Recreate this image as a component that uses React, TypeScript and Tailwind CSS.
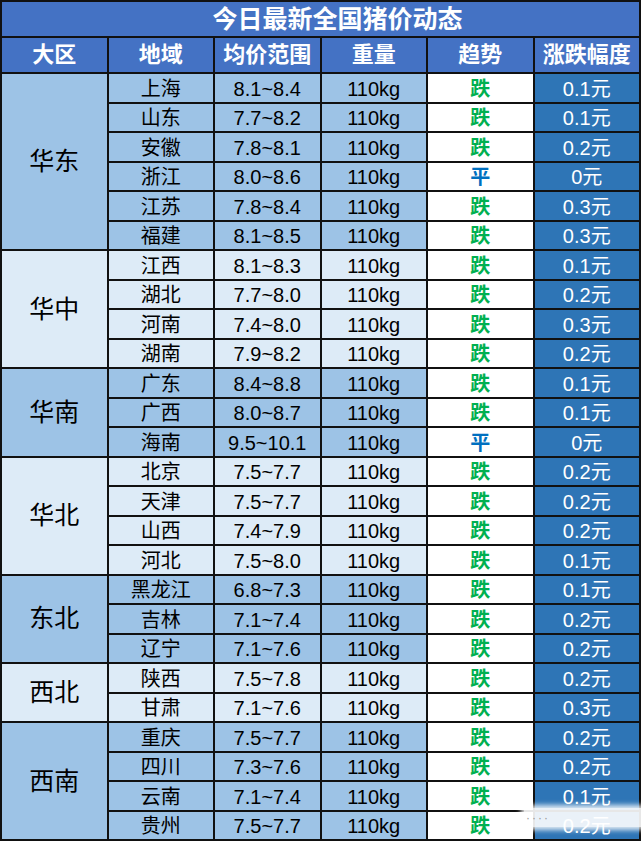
import React from "react";

type Row = { city: string; range: string; trend: "跌" | "平"; change: string };
type Group = { region: string; rows: Row[] };

const GROUPS: Group[] = [
  {
    region: "华东",
    rows: [
      { city: "上海", range: "8.1~8.4", trend: "跌", change: "0.1元" },
      { city: "山东", range: "7.7~8.2", trend: "跌", change: "0.1元" },
      { city: "安徽", range: "7.8~8.1", trend: "跌", change: "0.2元" },
      { city: "浙江", range: "8.0~8.6", trend: "平", change: "0元" },
      { city: "江苏", range: "7.8~8.4", trend: "跌", change: "0.3元" },
      { city: "福建", range: "8.1~8.5", trend: "跌", change: "0.3元" },
    ],
  },
  {
    region: "华中",
    rows: [
      { city: "江西", range: "8.1~8.3", trend: "跌", change: "0.1元" },
      { city: "湖北", range: "7.7~8.0", trend: "跌", change: "0.2元" },
      { city: "河南", range: "7.4~8.0", trend: "跌", change: "0.3元" },
      { city: "湖南", range: "7.9~8.2", trend: "跌", change: "0.2元" },
    ],
  },
  {
    region: "华南",
    rows: [
      { city: "广东", range: "8.4~8.8", trend: "跌", change: "0.1元" },
      { city: "广西", range: "8.0~8.7", trend: "跌", change: "0.1元" },
      { city: "海南", range: "9.5~10.1", trend: "平", change: "0元" },
    ],
  },
  {
    region: "华北",
    rows: [
      { city: "北京", range: "7.5~7.7", trend: "跌", change: "0.2元" },
      { city: "天津", range: "7.5~7.7", trend: "跌", change: "0.2元" },
      { city: "山西", range: "7.4~7.9", trend: "跌", change: "0.2元" },
      { city: "河北", range: "7.5~8.0", trend: "跌", change: "0.1元" },
    ],
  },
  {
    region: "东北",
    rows: [
      { city: "黑龙江", range: "6.8~7.3", trend: "跌", change: "0.1元" },
      { city: "吉林", range: "7.1~7.4", trend: "跌", change: "0.2元" },
      { city: "辽宁", range: "7.1~7.6", trend: "跌", change: "0.2元" },
    ],
  },
  {
    region: "西北",
    rows: [
      { city: "陕西", range: "7.5~7.8", trend: "跌", change: "0.2元" },
      { city: "甘肃", range: "7.1~7.6", trend: "跌", change: "0.3元" },
    ],
  },
  {
    region: "西南",
    rows: [
      { city: "重庆", range: "7.5~7.7", trend: "跌", change: "0.2元" },
      { city: "四川", range: "7.3~7.6", trend: "跌", change: "0.2元" },
      { city: "云南", range: "7.1~7.4", trend: "跌", change: "0.1元" },
      { city: "贵州", range: "7.5~7.7", trend: "跌", change: "0.2元" },
    ],
  },
];

const SPAN: Record<number, string> = {
  2: "row-span-2",
  3: "row-span-3",
  4: "row-span-4",
  6: "row-span-6",
};

const HEADERS = ["大区", "地域", "均价范围", "重量", "趋势", "涨跌幅度"];

const cell = "flex items-center justify-center text-[20px] leading-none pt-[2px]";

export default function App() {
  return (
    <div
      className="relative w-[641px] h-[841px] overflow-hidden bg-[#111]"
      style={{ fontFamily: '"Liberation Sans", "Noto Sans CJK SC", sans-serif' }}
    >
      <div className="grid grid-cols-6 grid-rows-[34px_34px_repeat(26,27.5px)] gap-[2px] p-[2px]">
        {/* title */}
        <div className="col-span-6 bg-[#4472c4] flex items-center justify-center pl-[34px] text-white text-[25px] font-bold leading-none">
          今日最新全国猪价动态
        </div>

        {/* header */}
        {HEADERS.map((h) => (
          <div
            key={h}
            className="bg-[#4472c4] flex items-center justify-center text-white text-[22px] font-bold leading-none"
          >
            {h}
          </div>
        ))}

        {GROUPS.map((g, gi) => {
          const bg = gi % 2 === 0 ? "bg-[#9dc3e6]" : "bg-[#ddebf7]";
          return (
            <React.Fragment key={g.region}>
              <div
                className={`${SPAN[g.rows.length]} ${bg} flex items-center justify-center text-[25px] text-black leading-none`}
                style={{ gridColumn: 1 }}
              >
                {g.region}
              </div>
              {g.rows.map((r) => (
                <React.Fragment key={r.city}>
                  <div className={`${cell} ${bg} text-black`}>{r.city}</div>
                  <div className={`${cell} ${bg} text-black`}>{r.range}</div>
                  <div className={`${cell} ${bg} text-black`}>110kg</div>
                  <div
                    className={`${cell} bg-white font-bold ${
                      r.trend === "跌" ? "text-[#00b050]" : "text-[#0070c0]"
                    }`}
                  >
                    {r.trend}
                  </div>
                  <div className={`${cell} bg-[#2e75b6] text-white`}>{r.change}</div>
                </React.Fragment>
              ))}
            </React.Fragment>
          );
        })}
      </div>

      {/* watermark smear */}
      <div className="absolute left-[524px] top-[808px] w-[117px] h-[19px] bg-white/90 shadow-[0_0_5px_3px_rgba(255,255,255,0.85)] flex items-center pl-[2px] text-[12px] text-[#999] tracking-[2px]">
        ····
      </div>
    </div>
  );
}
